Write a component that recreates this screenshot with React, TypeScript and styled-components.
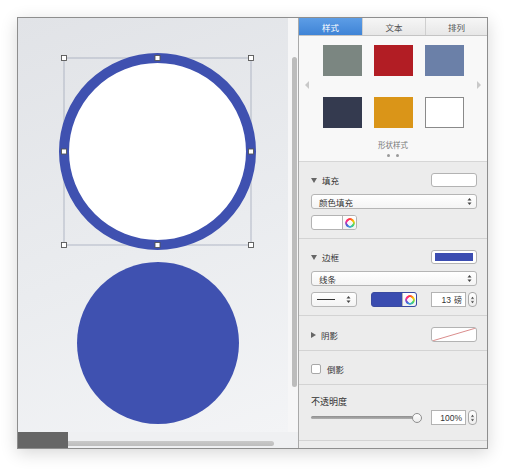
import React from "react";
import styled, { createGlobalStyle } from "styled-components";

const Global = createGlobalStyle`
  html, body { margin: 0; padding: 0; background: #ffffff; }
  body { font-family: "Noto Sans CJK SC", "Noto Sans", sans-serif; }
  * { box-sizing: border-box; }
`;

const Page = styled.div`
  width: 515px;
  height: 476px;
  padding: 17px 0 0 17px;
`;

const Window = styled.div`
  width: 471px;
  height: 432px;
  display: flex;
  border: 1px solid #8e8e8e;
  box-shadow: 0 4px 16px rgba(0, 0, 0, 0.16);
  background: #ececec;
`;

const Canvas = styled.div`
  width: 280px;
  display: grid;
  grid-template-columns: 270px 10px;
  grid-template-rows: 414px 16px;
`;

const Drawing = styled.div`
  background: linear-gradient(160deg, #e1e3e7 0%, #eaecef 55%, #f3f4f6 100%);
`;

const VStrip = styled.div`
  background: #f6f6f7;
  padding: 39px 0 0 4px;
`;

const VThumb = styled.div`
  width: 5px;
  height: 330px;
  border-radius: 3px;
  background: #bcbcbc;
`;

const BottomBar = styled.div`
  grid-column: 1 / span 2;
  display: flex;
  background: #eff0f2;
`;

const DarkBlock = styled.div`
  width: 50px;
  height: 16px;
  background: #666666;
`;

const HTrack = styled.div`
  width: 206px;
  height: 5px;
  margin-top: 9px;
  border-radius: 0 3px 3px 0;
  background: linear-gradient(#c9c9c9, #bdbdbd);
`;

const Panel = styled.div`
  width: 189px;
  border-left: 1px solid #a9a9a9;
  display: flex;
  flex-direction: column;
  background: #ececec;
  color: #3c3c3c;
`;

const Tabs = styled.div`
  display: grid;
  grid-template-columns: 63px 63px 1fr;
  height: 18px;
  border-bottom: 1px solid #c4c4c4;
`;

const Tab = styled.div<{ $active?: boolean }>`
  display: flex;
  align-items: center;
  justify-content: center;
  font-size: 8.5px;
  color: ${(p) => (p.$active ? "#ffffff" : "#555555")};
  background: ${(p) =>
    p.$active
      ? "linear-gradient(#5d9de6, #3f84d6)"
      : "linear-gradient(#f6f6f6, #e7e7e7)"};
  border-left: ${(p) => (p.$active ? "none" : "1px solid #cfcfcf")};
`;

const SwatchArea = styled.div`
  height: 126px;
  background: #f8f8f8;
  border-bottom: 1px solid #d6d6d6;
  display: flex;
  flex-direction: column;
  align-items: stretch;
  padding-top: 9px;
`;

const Carousel = styled.div`
  display: flex;
  align-items: center;
`;

const Arrow = styled.div<{ $side: "left" | "right" }>`
  flex: 1;
  display: flex;
  justify-content: ${(p) => (p.$side === "left" ? "flex-start" : "flex-end")};
  padding: ${(p) => (p.$side === "left" ? "0 0 4px 6px" : "0 6px 4px 0")};
`;

const Tri = styled.div<{ $dir: "left" | "right" }>`
  width: 0;
  height: 0;
  border-top: 4px solid transparent;
  border-bottom: 4px solid transparent;
  ${(p) =>
    p.$dir === "left"
      ? "border-right: 4px solid #c9c9c9;"
      : "border-left: 4px solid #c9c9c9;"}
`;

const SwatchGrid = styled.div`
  display: grid;
  grid-template-columns: repeat(3, 39px);
  column-gap: 12px;
  row-gap: 21px;
`;

const Swatch = styled.div<{ $color: string; $outlined?: boolean }>`
  width: 39px;
  height: 31px;
  background: ${(p) => p.$color};
  border: ${(p) => (p.$outlined ? "1px solid #8a8a8a" : "none")};
`;

const Caption = styled.div`
  margin-top: 11px;
  text-align: center;
  font-size: 7.5px;
  line-height: 12px;
  color: #777777;
`;

const Dots = styled.div`
  display: flex;
  justify-content: center;
  gap: 6px;
  margin-top: 3px;
`;

const Dot = styled.div`
  width: 3px;
  height: 3px;
  border-radius: 50%;
  background: #9a9a9a;
`;

const Section = styled.div<{ $pt: number; $pb: number }>`
  padding: ${(p) => `${p.$pt}px 10px ${p.$pb}px 12px`};
  border-bottom: 1px solid #d3d3d3;
  display: flex;
  flex-direction: column;
`;

const HeaderRow = styled.div<{ $h?: number }>`
  height: ${(p) => p.$h ?? 14}px;
  display: flex;
  align-items: center;
  justify-content: space-between;
`;

const HeaderLabel = styled.div`
  display: flex;
  align-items: center;
  gap: 5px;
  font-size: 8.5px;
  color: #333333;
`;

const Disclosure = styled.div<{ $open: boolean }>`
  width: 0;
  height: 0;
  ${(p) =>
    p.$open
      ? `border-left: 3px solid transparent; border-right: 3px solid transparent; border-top: 5px solid #666;`
      : `border-top: 3px solid transparent; border-bottom: 3px solid transparent; border-left: 5px solid #666;`}
`;

const Well = styled.div`
  width: 46px;
  height: 14px;
  border: 1px solid #b3b3b3;
  border-radius: 3px;
  background: #ffffff;
  padding: 2px 3px;
  display: flex;
`;

const WellFill = styled.div`
  flex: 1;
  background: #3c4db1;
`;

const Select = styled.div`
  margin-top: 7px;
  height: 15px;
  border: 1px solid #b5b5b5;
  border-radius: 3px;
  background: linear-gradient(#ffffff, #f4f4f4);
  display: flex;
  align-items: center;
  justify-content: space-between;
  padding: 0 4px 0 7px;
  font-size: 8.5px;
  color: #333333;
`;

const Chevrons = () => (
  <svg width="5" height="9" viewBox="0 0 5 9">
    <path d="M0.5 3.5 L2.5 1 L4.5 3.5 Z" fill="#444" />
    <path d="M0.5 5.5 L2.5 8 L4.5 5.5 Z" fill="#444" />
  </svg>
);

const Row = styled.div`
  margin-top: 6px;
  height: 15px;
  display: flex;
  align-items: center;
  justify-content: space-between;
`;

const ColorWell = styled.div<{ $color: string; $border: string }>`
  width: 46px;
  height: 15px;
  display: flex;
  border: 1px solid ${(p) => p.$border};
  border-radius: 3px;
  overflow: hidden;
  background: ${(p) => p.$color};
`;

const WellMain = styled.div`
  flex: 1;
`;

const WheelButton = styled.div`
  width: 14px;
  display: flex;
  align-items: center;
  justify-content: center;
  background: linear-gradient(#ffffff, #f1f1f1);
  border-left: 1px solid #b5b5b5;
`;

const Wheel = styled.div`
  width: 10px;
  height: 10px;
  border-radius: 50%;
  background: conic-gradient(#ff3b30, #ffcc00, #4cd964, #34aadc, #5856d6, #ff2d92, #ff3b30);
  -webkit-mask: radial-gradient(circle, transparent 2.5px, #000 3px);
  mask: radial-gradient(circle, transparent 2.5px, #000 3px);
`;

const LineSelect = styled.div`
  width: 46px;
  height: 15px;
  border: 1px solid #b5b5b5;
  border-radius: 3px;
  background: linear-gradient(#ffffff, #f4f4f4);
  display: flex;
  align-items: center;
  justify-content: space-between;
  padding: 0 5px;
`;

const LineSample = styled.div`
  width: 18px;
  height: 1px;
  background: #333;
`;

const FieldGroup = styled.div`
  display: flex;
  align-items: center;
  gap: 2px;
`;

const NumField = styled.div`
  width: 35px;
  height: 15px;
  border: 1px solid #b3b3b3;
  background: #ffffff;
  display: flex;
  align-items: center;
  justify-content: flex-end;
  padding-right: 3px;
  font-family: "Liberation Sans", "Noto Sans CJK SC", sans-serif;
  font-size: 8.5px;
  color: #333;
  gap: 3px;
`;

const Unit = styled.span`
  font-family: "Noto Sans CJK SC", sans-serif;
  font-size: 8px;
`;

const Stepper = styled.div`
  width: 9px;
  height: 15px;
  border: 1px solid #a9a9a9;
  border-radius: 4px;
  background: linear-gradient(#ffffff, #eeeeee);
  display: flex;
  align-items: center;
  justify-content: center;
`;

const StepperIcon = () => (
  <svg width="5" height="10" viewBox="0 0 5 10">
    <path d="M1 3.8 L2.5 1.8 L4 3.8 Z" fill="#444" />
    <path d="M1 6.2 L2.5 8.2 L4 6.2 Z" fill="#444" />
    <path d="M0.5 5 H4.5" stroke="#bbb" strokeWidth="0.6" />
  </svg>
);

const ShadowBox = styled.div`
  width: 46px;
  height: 15px;
  border: 1px solid #b3b3b3;
  border-radius: 3px;
  background: #ffffff;
  overflow: hidden;
  display: flex;
`;

const CheckRow = styled.div`
  height: 10px;
  display: flex;
  align-items: center;
  gap: 6px;
  font-size: 8.5px;
  color: #333333;
`;

const Checkbox = styled.div`
  width: 10px;
  height: 10px;
  border: 1px solid #a8a8a8;
  border-radius: 2px;
  background: #ffffff;
`;

const Label = styled.div`
  font-size: 9px;
  line-height: 14px;
  color: #333;
`;

const SliderRow = styled.div`
  margin-top: 1px;
  height: 15px;
  display: flex;
  align-items: center;
  justify-content: space-between;
`;

const Slider = styled.div`
  width: 111px;
  display: flex;
  align-items: center;
`;

const Track = styled.div`
  flex: 1;
  height: 3px;
  border-radius: 2px;
  background: linear-gradient(#8e8e8e, #b0b0b0);
`;

const Knob = styled.div`
  width: 10px;
  height: 10px;
  border-radius: 50%;
  border: 1px solid #8f8f8f;
  background: linear-gradient(#ffffff, #ececec);
  margin-left: -1px;
`;

const BLUE = "#3f51b0";

const handles: [number, number][] = [
  [46, 40], [139.5, 40], [233, 40],
  [46, 133.5], [233, 133.5],
  [46, 227], [139.5, 227], [233, 227],
];

const CanvasDrawing = () => (
  <svg width="270" height="414" viewBox="0 0 270 414" style={{ display: "block" }}>
    <rect x="46" y="40" width="187" height="187" fill="none" stroke="#a3aabb" strokeWidth="0.8" />
    <circle cx="139.5" cy="133.5" r="93.5" fill="#ffffff" stroke={BLUE} strokeWidth="10" />
    {handles.map(([x, y], i) => (
      <rect key={i} x={x - 2.5} y={y - 2.5} width="5" height="5" fill="#ffffff" stroke="#555" strokeWidth="0.9" />
    ))}
    <circle cx="140" cy="325" r="81" fill={BLUE} />
  </svg>
);

export default function App() {
  return (
    <>
      <Global />
      <Page>
        <Window>
          <Canvas>
            <Drawing>
              <CanvasDrawing />
            </Drawing>
            <VStrip>
              <VThumb />
            </VStrip>
            <BottomBar>
              <DarkBlock />
              <HTrack />
            </BottomBar>
          </Canvas>
          <Panel>
            <Tabs>
              <Tab $active>样式</Tab>
              <Tab>文本</Tab>
              <Tab>排列</Tab>
            </Tabs>
            <SwatchArea>
              <Carousel>
                <Arrow $side="left"><Tri $dir="left" /></Arrow>
                <SwatchGrid>
                  <Swatch $color="#7b8681" />
                  <Swatch $color="#b21d24" />
                  <Swatch $color="#6b80a8" />
                  <Swatch $color="#343a4f" />
                  <Swatch $color="#da9518" />
                  <Swatch $color="#ffffff" $outlined />
                </SwatchGrid>
                <Arrow $side="right"><Tri $dir="right" /></Arrow>
              </Carousel>
              <Caption>形状样式</Caption>
              <Dots>
                <Dot />
                <Dot />
              </Dots>
            </SwatchArea>

            <Section $pt={11} $pb={8}>
              <HeaderRow>
                <HeaderLabel><Disclosure $open />填充</HeaderLabel>
                <Well />
              </HeaderRow>
              <Select>
                <span>颜色填充</span>
                <Chevrons />
              </Select>
              <Row>
                <ColorWell $color="#ffffff" $border="#b3b3b3">
                  <WellMain />
                  <WheelButton><Wheel /></WheelButton>
                </ColorWell>
              </Row>
            </Section>

            <Section $pt={11} $pb={8}>
              <HeaderRow>
                <HeaderLabel><Disclosure $open />边框</HeaderLabel>
                <Well><WellFill /></Well>
              </HeaderRow>
              <Select>
                <span>线条</span>
                <Chevrons />
              </Select>
              <Row>
                <LineSelect>
                  <LineSample />
                  <Chevrons />
                </LineSelect>
                <ColorWell $color="#3a4cb0" $border="#3a4aa0">
                  <WellMain />
                  <WheelButton><Wheel /></WheelButton>
                </ColorWell>
                <FieldGroup>
                  <NumField>13<Unit>磅</Unit></NumField>
                  <Stepper><StepperIcon /></Stepper>
                </FieldGroup>
              </Row>
            </Section>

            <Section $pt={11} $pb={8}>
              <HeaderRow $h={15}>
                <HeaderLabel><Disclosure $open={false} />阴影</HeaderLabel>
                <ShadowBox>
                  <svg width="44" height="13" viewBox="0 0 44 13">
                    <line x1="0" y1="13" x2="44" y2="0" stroke="#d0706e" strokeWidth="0.8" />
                  </svg>
                </ShadowBox>
              </HeaderRow>
            </Section>

            <Section $pt={13} $pb={10}>
              <CheckRow>
                <Checkbox />
                倒影
              </CheckRow>
            </Section>

            <Section $pt={10} $pb={15}>
              <Label>不透明度</Label>
              <SliderRow>
                <Slider>
                  <Track />
                  <Knob />
                </Slider>
                <FieldGroup>
                  <NumField>100%</NumField>
                  <Stepper><StepperIcon /></Stepper>
                </FieldGroup>
              </SliderRow>
            </Section>
          </Panel>
        </Window>
      </Page>
    </>
  );
}
